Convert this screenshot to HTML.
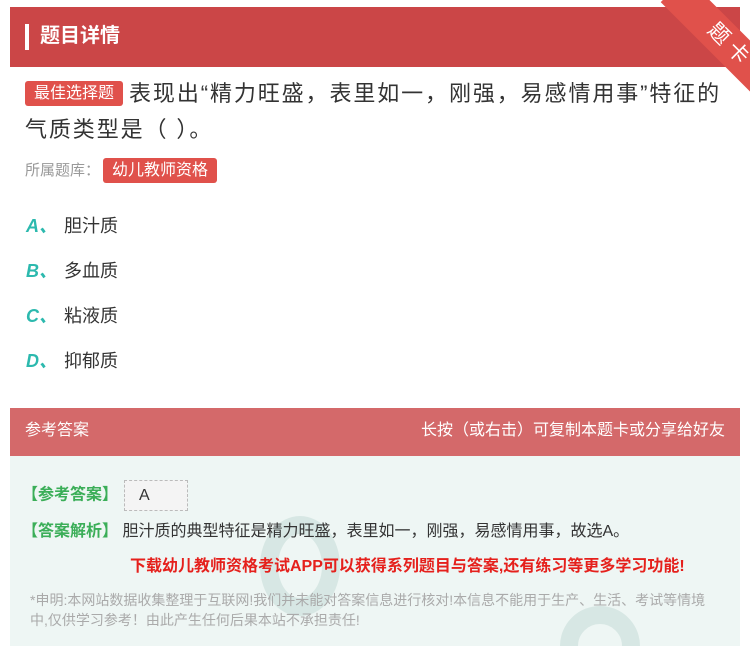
<!DOCTYPE html>
<html><head><meta charset="utf-8"><style>
*{margin:0;padding:0;box-sizing:border-box}
body{width:750px;height:646px;background:#fff;font-family:"Liberation Sans","Noto Sans CJK SC",sans-serif;position:relative;overflow:hidden;color:#333}
.hd{position:absolute;left:10px;top:7px;width:730px;height:60px;background:#cb4647}
.hd .bar{position:absolute;left:15px;top:17px;width:4px;height:26px;background:#fff}
.hd .t{position:absolute;left:30px;top:15px;color:#fff;font-size:20px;font-weight:bold;line-height:28px}
.rib{position:absolute;right:0;top:0;width:120px;height:120px;overflow:hidden}
.rib div{position:absolute;left:20px;top:28px;width:160px;height:36px;background:#e0514b;transform:rotate(45deg);color:#fff;font-size:21px;text-align:center;line-height:36px;letter-spacing:6px}
.q{position:absolute;left:25px;top:76px;width:725px;font-size:22px;line-height:36px;color:#333;white-space:nowrap}
.q .tx{letter-spacing:1.9px}
.tag{display:inline-block;background:#e0514b;color:#fff;font-size:16px;line-height:25px;padding:0 9px;border-radius:3px;vertical-align:3px;margin-right:6px}
.src{position:absolute;left:25px;top:158px;font-size:15px;color:#999;line-height:24px}
.src .tag{font-size:16px;vertical-align:0;margin-left:3px}
.op{position:absolute;left:26px;font-size:18px;color:#333;line-height:24px}
.op b{color:#2cb9ae;font-style:italic;display:inline-block;width:38px}
.ah{position:absolute;left:10px;top:408px;width:730px;height:48px;background:#d4696a;color:#fff;font-size:16px;line-height:46px;padding:0 15px}
.ah span{float:right}
.ab{position:absolute;left:10px;top:456px;width:730px;height:190px;background:#eef6f4;overflow:hidden}
.l1{position:absolute;left:22px;font-size:16px;line-height:24px}
.g{color:#3bae58;font-weight:bold}
.red{position:absolute;left:130px;top:552px;color:#e5201c;font-size:16px;font-weight:bold}
.dc{position:absolute;left:30px;top:590px;width:690px;color:#aaa;font-size:14px;line-height:20px}
</style></head><body>
<div class="hd"><div class="bar"></div><div class="t">题目详情</div></div>
<div class="rib"><div>题卡</div></div>
<div class="q"><span class="tag">最佳选择题</span><span class="tx">表现出“精力旺盛，表里如一，刚强，易感情用事”特征的<br>气质类型是（ ）。</span></div>
<div class="src">所属题库：<span class="tag">幼儿教师资格</span></div>
<div class="op" style="top:214px"><b>A、</b>胆汁质</div>
<div class="op" style="top:259px"><b>B、</b>多血质</div>
<div class="op" style="top:304px"><b>C、</b>粘液质</div>
<div class="op" style="top:349px"><b>D、</b>抑郁质</div>
<div class="ah">参考答案<span>长按（或右击）可复制本题卡或分享给好友</span></div>
<div class="ab">
<div style="position:absolute;left:250px;top:60px;width:80px;height:100px;border:18px solid #c8ddd8;border-radius:50%;opacity:.6"></div>
<div style="position:absolute;left:550px;top:150px;width:80px;height:80px;border:18px solid #c8ddd8;border-radius:50%;opacity:.6"></div>
</div>
<div class="l1" style="top:480px"><span class="g">【参考答案】</span><span style="display:inline-block;width:64px;height:31px;background:#f4f4f4;border:1px dashed #bbb;vertical-align:middle;margin-left:6px;padding-left:14px;line-height:29px">A</span></div>
<div class="l1" style="top:520px"><span class="g">【答案解析】</span> 胆汁质的典型特征是精力旺盛，表里如一，刚强，易感情用事，故选A。</div>
<div class="red">下载幼儿教师资格考试APP可以获得系列题目与答案,还有练习等更多学习功能!</div>
<div class="dc">*申明:本网站数据收集整理于互联网!我们并未能对答案信息进行核对!本信息不能用于生产、生活、考试等情境中,仅供学习参考！由此产生任何后果本站不承担责任!</div>
</body></html>
